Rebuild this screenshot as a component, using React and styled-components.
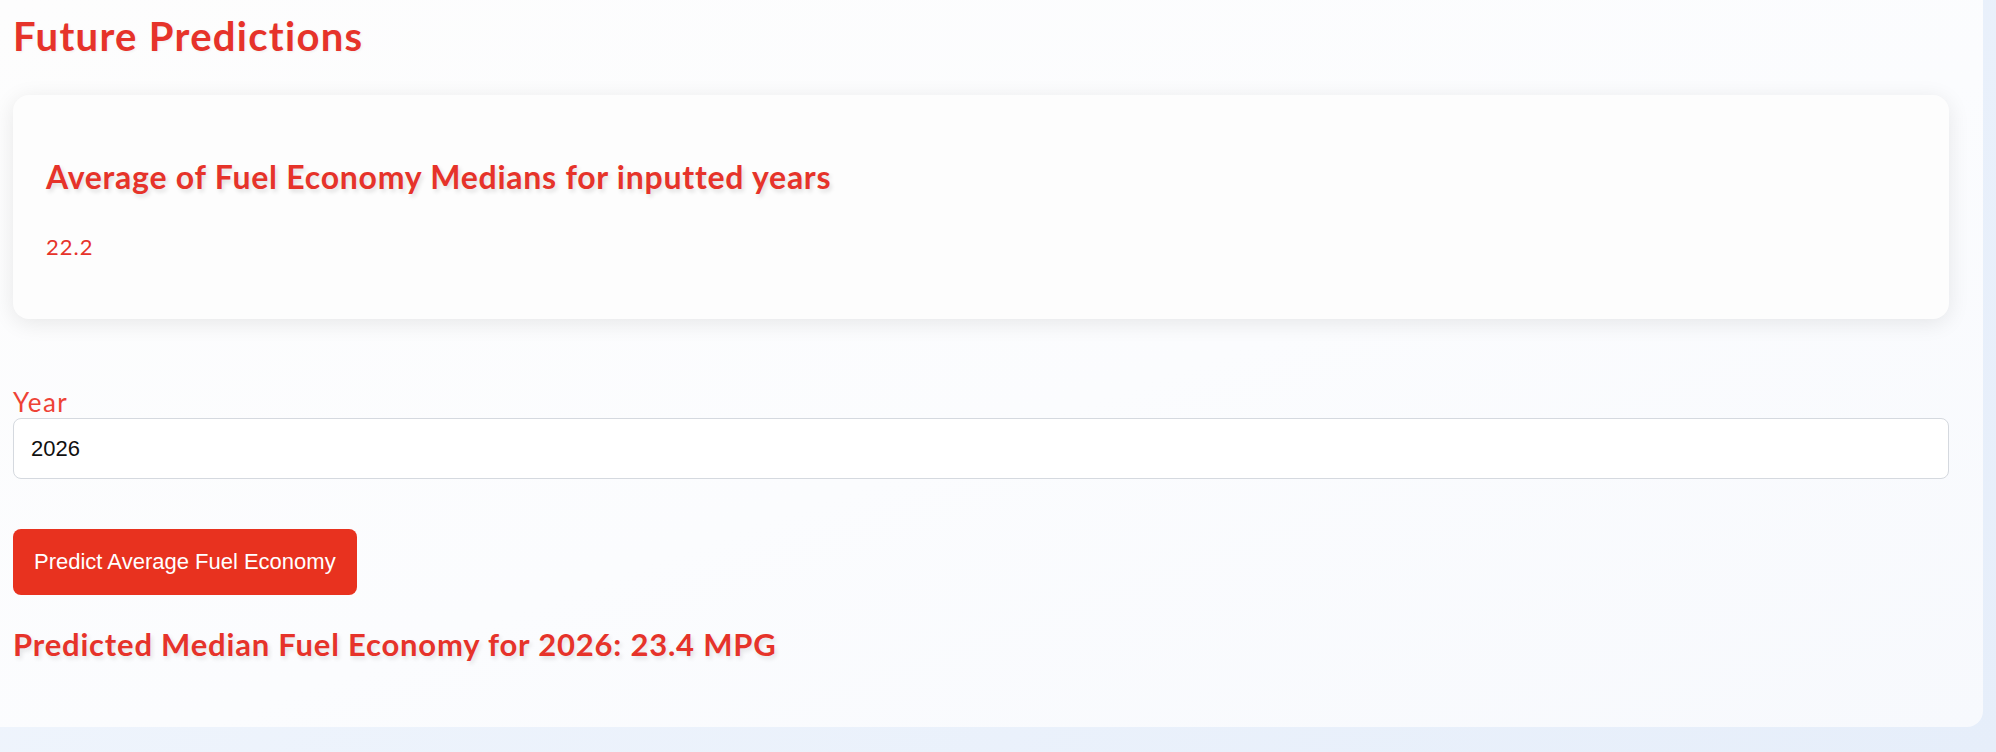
import React from "react";
import styled, { createGlobalStyle } from "styled-components";

const GlobalStyle = createGlobalStyle`
  html, body {
    margin: 0;
    padding: 0;
  }
  body {
    background: linear-gradient(135deg, #f1f6fd 0%, #e6eefa 100%);
    font-family: "Lato", "Open Sans", sans-serif;
    min-height: 752px;
    overflow: hidden;
  }
`;

const RED = "#e6332a";

const Page = styled.div`
  min-height: 752px;
  box-sizing: border-box;
  padding-right: 13px;
`;

const Panel = styled.section`
  box-sizing: border-box;
  background: linear-gradient(160deg, #fdfdfd 0%, #fbfcfe 55%, #f7f9fd 100%);
  border-radius: 0 0 16px 0;
  padding: 12px 34px 64px 13px;
`;

const Title = styled.h2`
  margin: 0;
  font-size: 40px;
  line-height: 48px;
  font-weight: 700;
  letter-spacing: 1.3px;
  color: ${RED};
  text-shadow: 1px 1px 3px rgba(0, 0, 0, 0.06);
`;

const Card = styled.div`
  margin-top: 35px;
  background: #fdfdfd;
  border-radius: 16px;
  box-shadow: 0 4px 22px rgba(0, 0, 0, 0.09);
  padding: 62px 33px 58px;
`;

const CardHeading = styled.h3`
  margin: 0;
  font-size: 32px;
  line-height: 40px;
  font-weight: 700;
  letter-spacing: 0.75px;
  color: ${RED};
  text-shadow: 2px 3px 4px rgba(0, 0, 0, 0.12);
`;

const CardValue = styled.p`
  margin: 36px 0 0;
  font-size: 22px;
  line-height: 28px;
  font-weight: 400;
  letter-spacing: 1px;
  color: ${RED};
`;

const Field = styled.div`
  margin-top: 68px;
  display: flex;
  flex-direction: column;
  gap: 1px;
`;

const Label = styled.label`
  font-size: 26px;
  line-height: 30px;
  font-weight: 400;
  letter-spacing: 1.4px;
  color: #ee4236;
`;

const Input = styled.input`
  box-sizing: border-box;
  width: 100%;
  height: 61px;
  padding: 0 17px;
  border: 1.5px solid #d5d9df;
  border-radius: 8px;
  background: #ffffff;
  font-family: "Liberation Sans", Arial, sans-serif;
  font-size: 22px;
  color: #111111;
  outline: none;
`;

const Button = styled.button`
  margin-top: 50px;
  display: block;
  box-sizing: border-box;
  height: 66px;
  padding: 0 21px;
  border: none;
  border-radius: 8px;
  background: #e8321f;
  color: #ffffff;
  font-family: "Liberation Sans", Arial, sans-serif;
  font-size: 22px;
  cursor: pointer;
`;

const Result = styled.h3`
  margin: 30px 0 0;
  font-size: 31px;
  line-height: 38px;
  font-weight: 700;
  letter-spacing: 0.8px;
  color: ${RED};
  text-shadow: 2px 3px 4px rgba(0, 0, 0, 0.1);
`;

export default function App() {
  return (
    <>
      <GlobalStyle />
      <Page>
        <Panel>
          <Title>Future Predictions</Title>
          <Card>
            <CardHeading>Average of Fuel Economy Medians for inputted years</CardHeading>
            <CardValue>22.2</CardValue>
          </Card>
          <Field>
            <Label htmlFor="year">Year</Label>
            <Input id="year" type="text" defaultValue="2026" />
          </Field>
          <Button type="button">Predict Average Fuel Economy</Button>
          <Result>Predicted Median Fuel Economy for 2026: 23.4 MPG</Result>
        </Panel>
      </Page>
    </>
  );
}
